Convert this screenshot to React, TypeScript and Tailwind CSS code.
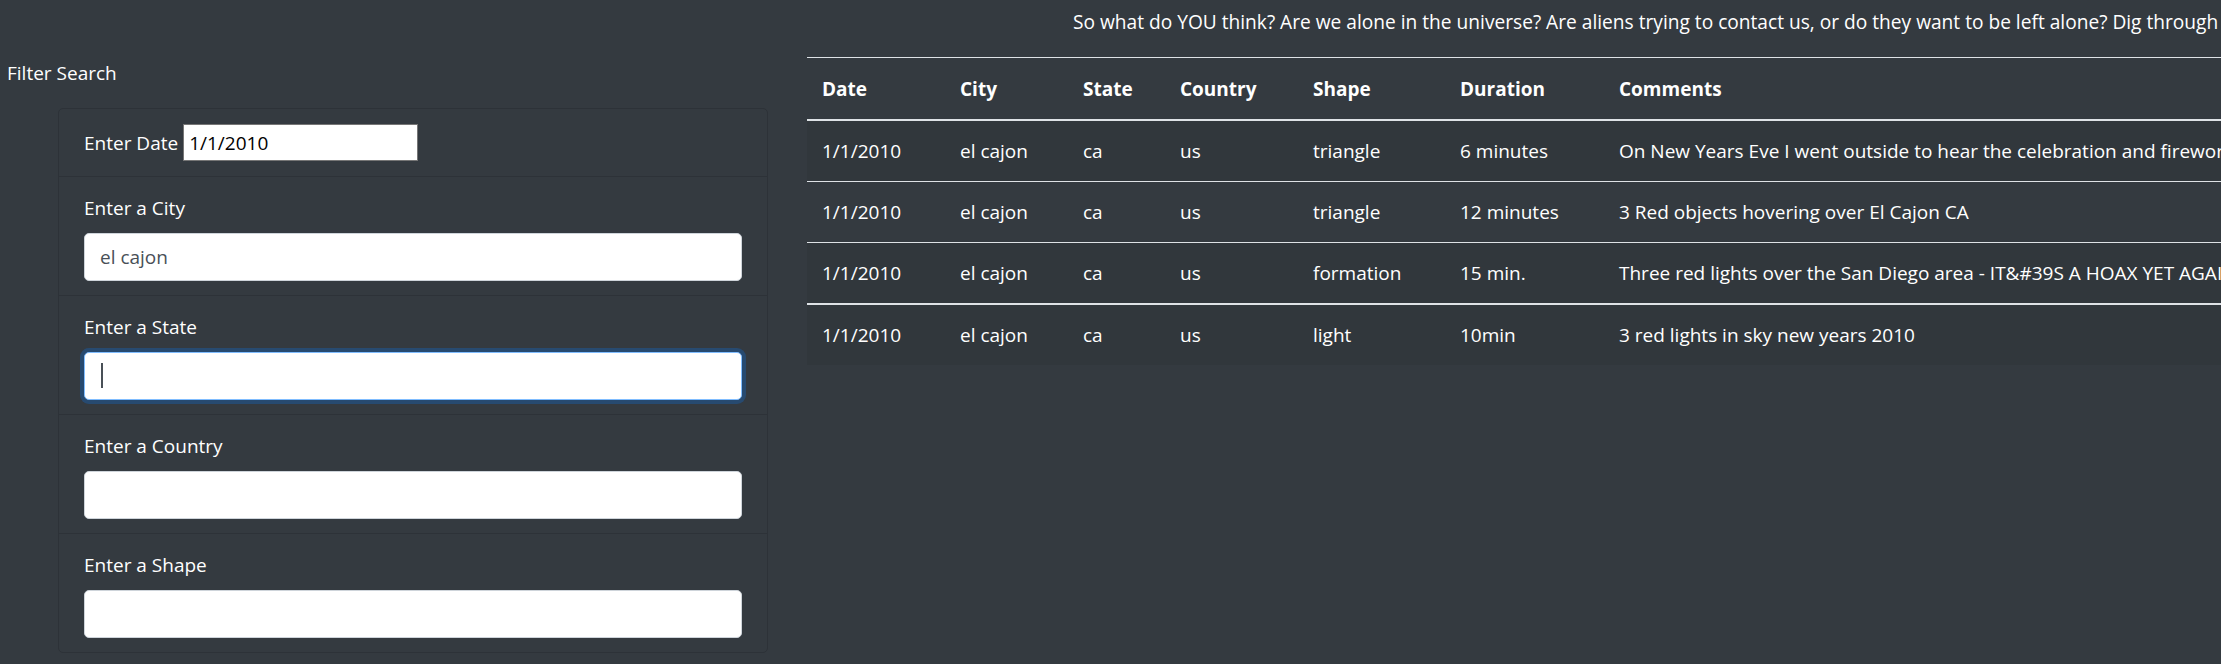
import React from "react";

type Sighting = {
  date: string;
  city: string;
  state: string;
  country: string;
  shape: string;
  duration: string;
  comments: string;
};

const SIGHTINGS: Sighting[] = [
  {
    date: "1/1/2010",
    city: "el cajon",
    state: "ca",
    country: "us",
    shape: "triangle",
    duration: "6 minutes",
    comments:
      "On New Years Eve I went outside to hear the celebration and fireworks and saw three red lights moving slowly across the sky",
  },
  {
    date: "1/1/2010",
    city: "el cajon",
    state: "ca",
    country: "us",
    shape: "triangle",
    duration: "12 minutes",
    comments: "3 Red objects hovering over El Cajon CA",
  },
  {
    date: "1/1/2010",
    city: "el cajon",
    state: "ca",
    country: "us",
    shape: "formation",
    duration: "15 min.",
    comments: "Three red lights over the San Diego area - IT&#39S A HOAX YET AGAIN!!! They are just flares",
  },
];

const LAST: Sighting = {
  date: "1/1/2010",
  city: "el cajon",
  state: "ca",
  country: "us",
  shape: "light",
  duration: "10min",
  comments: "3 red lights in sky new years 2010",
};

// column widths measured off the screenshot (border-box, incl. 15px padding)
const COLUMNS = [
  { label: "Date", w: "w-[138px]" },
  { label: "City", w: "w-[123px]" },
  { label: "State", w: "w-[97px]" },
  { label: "Country", w: "w-[133px]" },
  { label: "Shape", w: "w-[147px]" },
  { label: "Duration", w: "w-[159px]" },
  { label: "Comments", w: "" },
];

const FIELDS = [
  { label: "Enter a City", value: "el cajon", focused: false },
  { label: "Enter a State", value: "", focused: true },
  { label: "Enter a Country", value: "", focused: false },
  { label: "Enter a Shape", value: "", focused: false },
];

function Row({ s, striped, thick }: { s: Sighting; striped: boolean; thick?: boolean }) {
  const cell = `px-[15px] py-[15px] border-[#dee2e6] ${thick ? "border-t-2" : "border-t"}`;
  return (
    <tr className={striped ? "bg-black/5" : ""}>
      <td className={cell}>{s.date}</td>
      <td className={cell}>{s.city}</td>
      <td className={cell}>{s.state}</td>
      <td className={cell}>{s.country}</td>
      <td className={cell}>{s.shape}</td>
      <td className={cell}>{s.duration}</td>
      <td className={cell}>{s.comments}</td>
    </tr>
  );
}

export default function App() {
  return (
    <div className="flex w-[2221px] h-[664px] overflow-hidden bg-[#343a40] text-white font-['Open_Sans',sans-serif] text-[19px] leading-[30px]">
      {/* Filter column */}
      <div className="w-[792px] shrink-0 flex flex-col">
        <p className="mt-[58px] pl-[7px]">Filter Search</p>

        <div className="mt-[20px] ml-[58px] w-[710px] rounded-[5px] border border-[#2d3238] overflow-hidden">
          <div className="flex items-center gap-[5px] px-[25px] py-[15px] border-b border-[#2d3238]">
            <label>Enter Date</label>
            <input
              readOnly
              value="1/1/2010"
              className="w-[235px] h-[37px] border border-[#767676] bg-white px-[5px] text-black outline-none"
            />
          </div>

          {FIELDS.map((f, i) => (
            <div
              key={f.label}
              className={`px-[25px] pt-[16px] pb-[14px] ${i < FIELDS.length - 1 ? "border-b border-[#2d3238]" : ""}`}
            >
              <label className="block mb-[10px]">{f.label}</label>
              <div className="relative">
                <input
                  readOnly
                  value={f.value}
                  className={`block w-full h-[48px] rounded-[5px] border bg-white px-[15px] text-[#495057] outline-none ${
                    f.focused
                      ? "border-[#80bdff] shadow-[0_0_0_4px_rgba(0,123,255,0.25)]"
                      : "border-[#ced4da]"
                  }`}
                />
                {f.focused && (
                  <span className="absolute left-[17px] top-[11px] w-[2px] h-[25px] bg-[#495057]" />
                )}
              </div>
            </div>
          ))}
        </div>
      </div>

      {/* Results column */}
      <div className="flex-1 min-w-0 px-[15px]">
        <p className="pt-[7px] pl-[266px] whitespace-nowrap text-[19.15px]">
          So what do YOU think? Are we alone in the universe? Are aliens trying to contact us, or do they want to be
          left alone? Dig through the data below and decide for yourself!
        </p>

        <table className="w-max mt-[20px] border-collapse whitespace-nowrap text-left">
          <thead>
            <tr>
              {COLUMNS.map((c) => (
                <th
                  key={c.label}
                  className={`${c.w} px-[15px] py-[15.5px] font-bold border-t border-b-2 border-[#dee2e6]`}
                >
                  {c.label}
                </th>
              ))}
            </tr>
          </thead>
          <tbody>
            {SIGHTINGS.map((s, i) => (
              <Row key={i} s={s} striped={i % 2 === 0} />
            ))}
          </tbody>
          <tbody>
            <Row s={LAST} striped thick />
          </tbody>
        </table>
      </div>
    </div>
  );
}
